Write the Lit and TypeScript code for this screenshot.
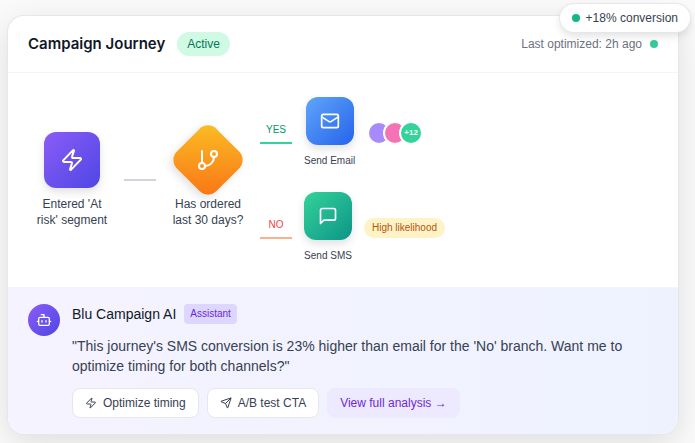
import { LitElement, html, css, svg } from "lit";
import { customElement } from "lit/decorators.js";

const icon = (size: number, body: unknown, width = 2) => html`<svg
  width=${size} height=${size} viewBox="0 0 24 24" fill="none" stroke="currentColor"
  stroke-width=${width} stroke-linecap="round" stroke-linejoin="round" aria-hidden="true">${body}</svg>`;

const bolt = svg`<path d="M4 14a1 1 0 0 1-.78-1.63l9.9-10.2a.5.5 0 0 1 .86.46l-1.92 6.02A1 1 0 0 0 13 10h7a1 1 0 0 1 .78 1.63l-9.9 10.2a.5.5 0 0 1-.86-.46l1.92-6.02A1 1 0 0 0 11 14z"/>`;
const branch = svg`<line x1="6" x2="6" y1="3" y2="15"/><circle cx="18" cy="6" r="3"/><circle cx="6" cy="18" r="3"/><path d="M18 9a9 9 0 0 1-9 9"/>`;
const mail = svg`<rect width="20" height="16" x="2" y="4" rx="2"/><path d="m22 7-8.97 5.7a1.94 1.94 0 0 1-2.06 0L2 7"/>`;
const message = svg`<path d="M21 15a2 2 0 0 1-2 2H7l-4 4V5a2 2 0 0 1 2-2h14a2 2 0 0 1 2 2z"/>`;
const bot = svg`<path d="M12 8V4H8"/><rect width="16" height="12" x="4" y="8" rx="2"/><path d="M2 14h2"/><path d="M20 14h2"/><path d="M15 13v2"/><path d="M9 13v2"/>`;
const send = svg`<path d="M14.536 21.686a.5.5 0 0 0 .937-.024l6.5-19a.496.496 0 0 0-.635-.635l-19 6.5a.5.5 0 0 0-.024.937l7.93 3.18a2 2 0 0 1 1.112 1.11z"/><path d="m21.854 2.147-10.94 10.939"/>`;

@customElement("app-root")
export class AppRoot extends LitElement {
  static styles = css`
    :host {
      display: block;
      box-sizing: border-box;
      min-height: 100vh;
      padding: 16px 17px 8px 8px;
      overflow: hidden;
      background: #fafafa;
      color: #374151;
      font: 400 12px/16px "Liberation Sans", Arial, sans-serif;
    }
    * { box-sizing: border-box; }
    h1, h2, p { margin: 0; }
    svg { display: block; flex: none; }
    .card {
      position: relative;
      border-radius: 16px;
      background: #fff;
      box-shadow: 0 0 0 1px #e5e7eb, 0 8px 32px rgba(0, 0, 0, 0.12);
    }
    .lift {
      position: absolute;
      top: -12px;
      right: -12px;
      display: flex;
      align-items: center;
      gap: 6px;
      height: 28px;
      padding: 0 12px;
      border-radius: 14px;
      background: #fff;
      box-shadow: 0 0 0 1px #e5e7eb, 0 4px 8px rgba(0, 0, 0, 0.12);
      font-weight: 500;
    }
    .dot { width: 8px; height: 8px; border-radius: 50%; background: #34c99b; }
    .lift .dot { background: #10b981; }
    .head {
      display: flex;
      align-items: center;
      justify-content: space-between;
      padding: 16px 20px;
      border-bottom: 1px solid #f3f4f6;
    }
    .head-title, .updated, .assistant-title { display: flex; align-items: center; }
    .head-title { gap: 12px; }
    h1 {
      color: #111827;
      font: 600 15px/24px Inter, "Liberation Sans", sans-serif;
    }
    .status {
      padding: 4px 10px;
      border-radius: 12px;
      background: #d1fae5;
      color: #047857;
      font-weight: 500;
    }
    .updated { gap: 8px; color: #6b7280; }
    .flow {
      display: flex;
      align-items: center;
      gap: 12px;
      padding: 24px;
    }
    .step {
      display: flex;
      flex-direction: column;
      align-items: center;
      gap: 8px;
      width: 80px;
      text-align: center;
      font-weight: 500;
    }
    .tile {
      display: grid;
      place-items: center;
      width: 56px;
      height: 56px;
      border-radius: 12px;
      color: #fff;
      box-shadow: 0 4px 8px rgba(0, 0, 0, 0.12);
    }
    .violet { background: linear-gradient(135deg, #8b5cf6, #4f46e5); }
    .blue { background: linear-gradient(135deg, #60a5fa, #2563eb); }
    .green { background: linear-gradient(135deg, #34d399, #0d9488); }
    .diamond {
      background: linear-gradient(135deg, #fbbf24, #f97316);
      transform: rotate(45deg);
    }
    .diamond svg { transform: rotate(-45deg); }
    .wire { width: 32px; height: 2px; background: #d1d5db; }
    .branches { display: flex; flex-direction: column; gap: 24px; }
    .branch { display: flex; align-items: center; gap: 12px; }
    .route {
      width: 32px;
      padding-bottom: 4px;
      border-bottom: 2px solid #34d399;
      color: #059669;
      font-size: 10px;
      font-weight: 500;
      text-align: center;
    }
    .route.no { border-color: #fdb08c; color: #ef4444; }
    .action {
      display: flex;
      flex-direction: column;
      align-items: center;
      gap: 8px;
      font-size: 10px;
      line-height: 15px;
      font-weight: 500;
    }
    .action .tile { width: 48px; height: 48px; }
    .people { display: flex; }
    .person {
      display: grid;
      place-items: center;
      width: 24px;
      height: 24px;
      border: 2px solid #fff;
      border-radius: 50%;
      background: #a78bfa;
      color: #fff;
      font-size: 8px;
      font-weight: 700;
    }
    .person + .person { margin-left: -8px; background: #f472b6; }
    .person + .more { background: #34d399; }
    .chance {
      padding: 2px 8px;
      border-radius: 10px;
      background: #fef3c7;
      color: #b45309;
      font-size: 10px;
      font-weight: 500;
    }
    .assistant {
      display: flex;
      gap: 12px;
      padding: 16px 20px;
      border-top: 1px solid #f3f4f6;
      border-radius: 0 0 16px 16px;
      background: linear-gradient(90deg, #f5f3ff, #eef2ff);
    }
    .avatar {
      display: grid;
      place-items: center;
      flex: none;
      width: 32px;
      height: 32px;
      border-radius: 50%;
      color: #fff;
    }
    .body { display: flex; flex-direction: column; gap: 12px; min-width: 0; }
    .assistant-title { gap: 8px; }
    h2 { color: #111827; font-size: 14px; line-height: 20px; font-weight: 500; }
    .role {
      padding: 2px 6px;
      border-radius: 4px;
      background: #ddd6fe;
      color: #6d28d9;
      font-size: 10px;
    }
    .quote { font-size: 14px; line-height: 20px; }
    .buttons { display: flex; flex-wrap: wrap; gap: 8px; }
    button {
      display: flex;
      align-items: center;
      gap: 6px;
      padding: 6px 12px;
      border: 1px solid #e5e7eb;
      border-radius: 8px;
      background: #fff;
      color: #374151;
      font: inherit;
      font-weight: 500;
    }
    button.link { border-color: #ede9fe; background: #ede9fe; color: #6d28d9; }
  `;

  render() {
    return html`
      <main class="card">
        <header class="head">
          <div class="head-title">
            <h1>Campaign Journey</h1>
            <span class="status">Active</span>
          </div>
          <div class="updated"><span>Last optimized: 2h ago</span><span class="dot"></span></div>
        </header>
        <section class="flow">
          <div class="step">
            <div class="tile violet">${icon(24, bolt)}</div>
            <span>Entered 'At risk' segment</span>
          </div>
          <div class="wire"></div>
          <div class="step">
            <div class="tile diamond">${icon(24, branch)}</div>
            <span>Has ordered last 30 days?</span>
          </div>
          <div class="branches">
            <div class="branch">
              <div class="route">YES</div>
              <div class="action"><div class="tile blue">${icon(20, mail)}</div><span>Send Email</span></div>
              <div class="people">
                <span class="person"></span><span class="person"></span><span class="person more">+12</span>
              </div>
            </div>
            <div class="branch">
              <div class="route no">NO</div>
              <div class="action"><div class="tile green">${icon(20, message)}</div><span>Send SMS</span></div>
              <span class="chance">High likelihood</span>
            </div>
          </div>
        </section>
        <section class="assistant">
          <div class="avatar violet">${icon(16, bot)}</div>
          <div class="body">
            <div class="assistant-title"><h2>Blu Campaign AI</h2><span class="role">Assistant</span></div>
            <p class="quote">"This journey's SMS conversion is 23% higher than email for the 'No' branch. Want me to optimize timing for both channels?"</p>
            <div class="buttons">
              <button type="button">${icon(12, bolt)}Optimize timing</button>
              <button type="button">${icon(12, send)}A/B test CTA</button>
              <button type="button" class="link">View full analysis →</button>
            </div>
          </div>
        </section>
        <div class="lift"><span class="dot"></span>+18% conversion</div>
      </main>
    `;
  }
}
